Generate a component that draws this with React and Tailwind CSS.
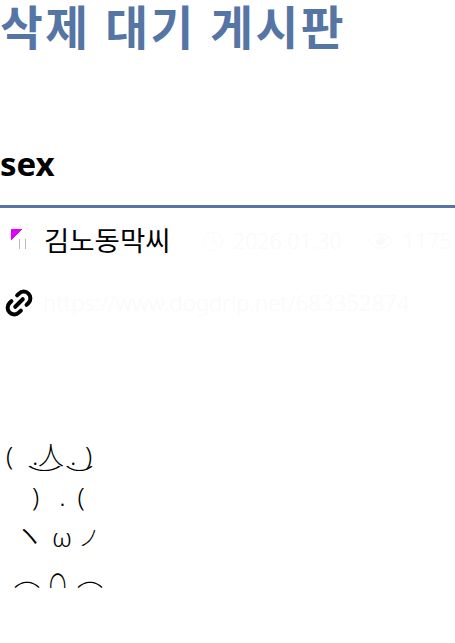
import { Clock, Link2 } from "lucide-react";

const font = "font-['Noto_Sans','Noto_Sans_CJK_KR',sans-serif]";

function EyeIcon() {
  return (
    <svg width="25" height="24" viewBox="0 0 25 24" fill="none" stroke="currentColor" strokeWidth="1">
      <path d="M1 12c3-5 7-7 11.500-7s8.500 2 11.500 7c-3 5-7 7-11.500 7s-8.500-2-11.500-7z" />
      <path d="M12.500 7.500a4.500 4.500 0 1 1-4.500 4.500c2 0 4.500-2 4.500-4.500z" fill="currentColor" />
    </svg>
  );
}

export default function App() {
  return (
    <div className={`h-[643px] w-[455px] overflow-hidden bg-white text-black ${font}`}>
      {/* Board title */}
      <h1 className="h-[60px] text-[46.500px] font-bold leading-[55px] tracking-[2.500px] whitespace-nowrap text-[#5575a5]">
        삭제 대기 게시판
      </h1>

      {/* Post title */}
      <h2 className="mt-[80px] h-[68px] border-b-[3px] border-[#5575a5] text-[33px] font-bold leading-[48px]">
        sex
      </h2>

      {/* Author and stats */}
      <div className="flex h-[66px] items-center whitespace-nowrap pl-[11px]">
        <div className="relative h-[24px] w-[33px]">
          <div className="h-[12px] w-[12px] bg-[linear-gradient(135deg,#e000ff_50%,transparent_50%)]" />
          <div className="absolute left-[8px] top-[10px] h-[10px] w-[7px] border-x border-[#bbbbbb]" />
        </div>
        <span className="w-[158px] text-[27.500px] leading-none">김노동막씨</span>
        <div className="flex items-center text-[21.500px] font-light text-[#fafafa]">
          <Clock size={22} strokeWidth={1} />
          <span className="ml-[9px]">2026.01.30</span>
          <span className="ml-[26px]"><EyeIcon /></span>
          <span className="ml-[10px]">1175</span>
        </div>
      </div>

      {/* Link */}
      <div className="mt-[15px] flex h-[28px] items-center gap-[6px] whitespace-nowrap pl-[3px]">
        <Link2 size={32} strokeWidth={3} className="-rotate-45 shrink-0" />
        <span className="ml-[2px] text-[22.200px] font-light text-[#fafafa]">https://www.dogdrip.net/683352874</span>
      </div>

      {/* Post body */}
      <div className="mt-[116px] h-[155px] overflow-hidden whitespace-nowrap text-[26px] font-light leading-[44px]">
        <div className="flex h-[41px] pl-[6px]">
          <span className="w-[21px]">(</span>
          <span className="w-[5px] origin-left scale-x-[2.2]">‿</span>
          <span className="w-[6px]">.</span>
          <span className="w-[27px]">人</span>
          <span className="w-[5px] origin-left scale-x-[1.8]">‿</span>
          <span className="w-[15px]">.</span>
          <span className="w-[6px]">)</span>
        </div>
        <div className="flex h-[41px] pl-[32px]">
          <span>)</span>
          <span className="ml-[20px]">.</span>
          <span className="ml-[12px]">(</span>
        </div>
        <div className="flex h-[45px] pl-[12px]">
          <span className="w-[40px] text-[34px] leading-[40px]">ヽ</span>
          <span className="w-[26px]">ω</span>
          <span className="w-[20px] text-[22px]">ノ</span>
        </div>
        <div className="flex h-[28px] pl-[14px] pt-[12px]">
          <span className="w-[32px]">⌒</span>
          <span className="w-[31px] -mt-[9px] origin-left scale-x-[.65] text-[36px] leading-[50px]">∩</span>
          <span>⌒</span>
        </div>
      </div>
    </div>
  );
}
